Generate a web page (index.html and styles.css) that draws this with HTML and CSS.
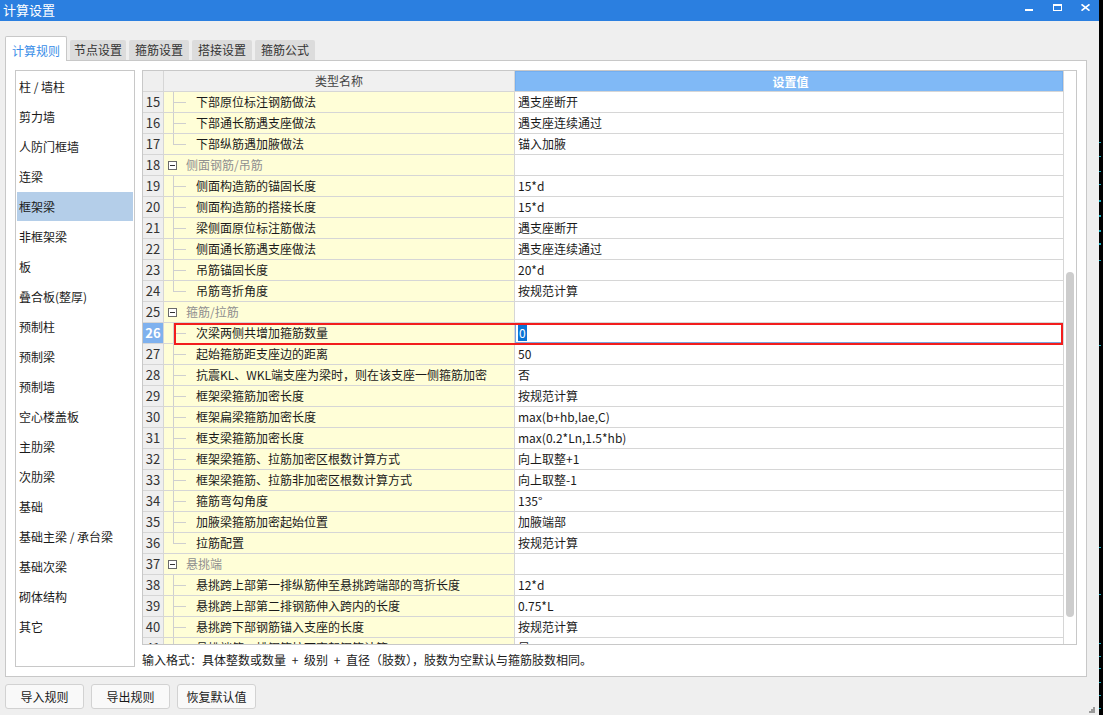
FILE: index.html
```html
<!DOCTYPE html>
<html lang="zh-CN">
<head>
<meta charset="utf-8">
<title>计算设置</title>
<link rel="stylesheet" href="styles.css">
</head>
<body>
<div class="app">
  <div class="window">
    <div class="titlebar">
      <span class="title">计算设置</span>
      <div class="controls">
        <span class="ctl"><svg class="ic-min" width="8" height="2" viewBox="0 0 8 2"><rect x="0" y="0" width="8" height="2" fill="#fff"/></svg></span>
        <span class="ctl"><svg class="ic-max" width="9" height="7" viewBox="0 0 9 7"><rect x="0.5" y="0.5" width="8" height="6" fill="none" stroke="#fff" stroke-width="1"/><rect x="0" y="0" width="9" height="2" fill="#fff"/></svg></span>
        <span class="ctl"><svg class="ic-close" width="9" height="7" viewBox="0 0 9 7"><path d="M0.5 0.3 L8.5 6.7 M8.5 0.3 L0.5 6.7" stroke="#fff" stroke-width="1.6" fill="none"/></svg></span>
      </div>
    </div>

    <div class="tabs">
      <div class="tab active">计算规则</div>
      <div class="tab w56">节点设置</div>
      <div class="tab">箍筋设置</div>
      <div class="tab">搭接设置</div>
      <div class="tab">箍筋公式</div>
    </div>

    <div class="panel">
      <ul class="cats">
        <li>柱 / 墙柱</li>
        <li>剪力墙</li>
        <li>人防门框墙</li>
        <li>连梁</li>
        <li class="sel">框架梁</li>
        <li>非框架梁</li>
        <li>板</li>
        <li>叠合板(整厚)</li>
        <li>预制柱</li>
        <li>预制梁</li>
        <li>预制墙</li>
        <li>空心楼盖板</li>
        <li>主肋梁</li>
        <li>次肋梁</li>
        <li>基础</li>
        <li>基础主梁 / 承台梁</li>
        <li>基础次梁</li>
        <li>砌体结构</li>
        <li>其它</li>
      </ul>

      <div class="right">
        <div class="grid">
          <div class="table">
            <div class="row head">
              <div class="num"></div>
              <div class="name">类型名称</div>
              <div class="val">设置值</div>
            </div>
            <div class="row"><div class="num">15</div><div class="name"><span class="indent"></span>下部原位标注钢筋做法</div><div class="val">遇支座断开</div></div>
            <div class="row"><div class="num">16</div><div class="name"><span class="indent"></span>下部通长筋遇支座做法</div><div class="val">遇支座连续通过</div></div>
            <div class="row"><div class="num">17</div><div class="name"><span class="indent last"></span>下部纵筋遇加腋做法</div><div class="val">锚入加腋</div></div>
            <div class="row"><div class="num">18</div><div class="name group"><span class="gbox"></span>侧面钢筋/吊筋</div><div class="val"></div></div>
            <div class="row"><div class="num">19</div><div class="name"><span class="indent"></span>侧面构造筋的锚固长度</div><div class="val">15*d</div></div>
            <div class="row"><div class="num">20</div><div class="name"><span class="indent"></span>侧面构造筋的搭接长度</div><div class="val">15*d</div></div>
            <div class="row"><div class="num">21</div><div class="name"><span class="indent"></span>梁侧面原位标注筋做法</div><div class="val">遇支座断开</div></div>
            <div class="row"><div class="num">22</div><div class="name"><span class="indent"></span>侧面通长筋遇支座做法</div><div class="val">遇支座连续通过</div></div>
            <div class="row"><div class="num">23</div><div class="name"><span class="indent"></span>吊筋锚固长度</div><div class="val">20*d</div></div>
            <div class="row"><div class="num">24</div><div class="name"><span class="indent last"></span>吊筋弯折角度</div><div class="val">按规范计算</div></div>
            <div class="row"><div class="num">25</div><div class="name group"><span class="gbox"></span>箍筋/拉筋</div><div class="val"></div></div>
            <div class="row cur"><div class="num">26</div><div class="name"><span class="indent"></span>次梁两侧共增加箍筋数量</div><div class="val edit"><span class="seltext">0</span></div><div class="mark"></div></div>
            <div class="row"><div class="num">27</div><div class="name"><span class="indent"></span>起始箍筋距支座边的距离</div><div class="val">50</div></div>
            <div class="row"><div class="num">28</div><div class="name"><span class="indent"></span>抗震KL、WKL端支座为梁时，则在该支座一侧箍筋加密</div><div class="val">否</div></div>
            <div class="row"><div class="num">29</div><div class="name"><span class="indent"></span>框架梁箍筋加密长度</div><div class="val">按规范计算</div></div>
            <div class="row"><div class="num">30</div><div class="name"><span class="indent"></span>框架扁梁箍筋加密长度</div><div class="val">max(b+hb,lae,C)</div></div>
            <div class="row"><div class="num">31</div><div class="name"><span class="indent"></span>框支梁箍筋加密长度</div><div class="val">max(0.2*Ln,1.5*hb)</div></div>
            <div class="row"><div class="num">32</div><div class="name"><span class="indent"></span>框架梁箍筋、拉筋加密区根数计算方式</div><div class="val">向上取整+1</div></div>
            <div class="row"><div class="num">33</div><div class="name"><span class="indent"></span>框架梁箍筋、拉筋非加密区根数计算方式</div><div class="val">向上取整-1</div></div>
            <div class="row"><div class="num">34</div><div class="name"><span class="indent"></span>箍筋弯勾角度</div><div class="val">135°</div></div>
            <div class="row"><div class="num">35</div><div class="name"><span class="indent"></span>加腋梁箍筋加密起始位置</div><div class="val">加腋端部</div></div>
            <div class="row"><div class="num">36</div><div class="name"><span class="indent last"></span>拉筋配置</div><div class="val">按规范计算</div></div>
            <div class="row"><div class="num">37</div><div class="name group"><span class="gbox"></span>悬挑端</div><div class="val"></div></div>
            <div class="row"><div class="num">38</div><div class="name"><span class="indent"></span>悬挑跨上部第一排纵筋伸至悬挑跨端部的弯折长度</div><div class="val">12*d</div></div>
            <div class="row"><div class="num">39</div><div class="name"><span class="indent"></span>悬挑跨上部第二排钢筋伸入跨内的长度</div><div class="val">0.75*L</div></div>
            <div class="row"><div class="num">40</div><div class="name"><span class="indent"></span>悬挑跨下部钢筋锚入支座的长度</div><div class="val">按规范计算</div></div>
            <div class="row"><div class="num">41</div><div class="name"><span class="indent"></span>悬挑端第二排钢筋按可弯起钢筋计算</div><div class="val">是</div></div>
          </div>
          <div class="vscroll"><div class="thumb"></div></div>
        </div>
        <div class="hint">输入格式：具体整数或数量 + 级别 + 直径（肢数），肢数为空默认与箍筋肢数相同。</div>
      </div>
    </div>

    <div class="buttons">
      <div class="btn">导入规则</div>
      <div class="btn">导出规则</div>
      <div class="btn">恢复默认值</div>
    </div>

    <svg class="grip" width="6" height="6" viewBox="0 0 6 6"><rect x="4" y="0" width="2" height="2" fill="#9a9a9a"/><rect x="2" y="2" width="2" height="2" fill="#9a9a9a"/><rect x="4" y="2" width="2" height="2" fill="#9a9a9a"/><rect x="0" y="4" width="2" height="2" fill="#9a9a9a"/><rect x="2" y="4" width="2" height="2" fill="#9a9a9a"/><rect x="4" y="4" width="2" height="2" fill="#9a9a9a"/></svg>
  </div>
  <div class="edge">
    <svg width="4" height="715" viewBox="0 0 4 715">
      <g fill="#17a8b8">
        <rect x="0" y="142" width="2" height="1"/>
        <rect x="0" y="156" width="2" height="1"/>
        <rect x="0" y="171" width="2" height="1"/>
        <rect x="0" y="184" width="2" height="1"/>
        <rect x="0" y="200" width="2" height="2"/>
        <rect x="0" y="215" width="2" height="2"/>
        <rect x="0" y="230" width="2" height="2"/>
        <rect x="0" y="243" width="2" height="2"/>
        <rect x="0" y="260" width="2" height="1"/>
        <rect x="0" y="345" width="2" height="1"/>
        <rect x="0" y="547" width="2" height="1"/>
        <rect x="0" y="594" width="2" height="1"/>
        <rect x="0" y="643" width="2" height="1"/>
        <rect x="0" y="656" width="2" height="1"/>
        <rect x="0" y="668" width="2" height="1"/>
        <rect x="0" y="682" width="2" height="1"/>
        <rect x="0" y="695" width="2" height="1"/>
        <rect x="0" y="708" width="2" height="1"/>
      </g>
    </svg>
  </div>
</div>
</body>
</html>
```

FILE: styles.css
```css
* {
  box-sizing: border-box;
  margin: 0;
  padding: 0;
}

html, body {
  width: 1103px;
  height: 715px;
  overflow: hidden;
}

body {
  background: #efefef;
  font-family: "Noto Sans CJK SC", "Noto Sans", sans-serif;
  font-size: 12px;
  color: #1a1a1a;
}

.app {
  display: flex;
  height: 715px;
}

.window {
  width: 1099px;
  display: flex;
  flex-direction: column;
  position: relative;
}

.edge {
  width: 4px;
  background: #000;
}

.edge svg {
  display: block;
}

/* title bar */
.titlebar {
  height: 21px;
  background: #2b7fe0;
  color: #fff;
  display: flex;
  justify-content: space-between;
}

.title {
  padding-left: 3px;
  font-size: 13px;
  line-height: 19px;
}

.controls {
  display: flex;
}

.ctl {
  width: 28px;
  display: flex;
  justify-content: center;
  align-items: flex-start;
}

.ic-min {
  margin-top: 9px;
}

.ic-max,
.ic-close {
  margin-top: 4px;
}

/* tabs */
.tabs {
  height: 39px;
  display: flex;
  align-items: flex-end;
  gap: 3px;
  padding-left: 5px;
}

.tab {
  width: 60px;
  height: 20px;
  line-height: 20px;
  background: #dcdcdc;
  border-radius: 2px 2px 0 0;
  text-align: center;
  color: #333;
}

.tab.w56 {
  width: 56px;
}

.tab.active {
  width: 62px;
  height: 25px;
  margin-bottom: -1px;
  padding-top: 4px;
  background: #fff;
  border: 1px solid #c8c8c8;
  border-bottom: none;
  border-radius: 2px 2px 0 0;
  color: #3a8ee8;
  z-index: 1;
}

/* panel */
.panel {
  margin: 0 12px 0 5px;
  height: 617px;
  background: #fff;
  border: 1px solid #c8c8c8;
  padding: 9px;
  display: flex;
  gap: 7px;
}

.cats {
  width: 120px;
  flex: none;
  border: 1px solid #c8c8c8;
  padding: 1px;
  list-style: none;
}

.cats li {
  height: 29px;
  margin-bottom: 1px;
  line-height: 29px;
  padding-left: 2px;
  white-space: nowrap;
}

.cats li.sel {
  background: #b4cee9;
}

.right {
  flex: 1;
  display: flex;
  flex-direction: column;
}

/* grid */
.grid {
  height: 575px;
  border: 1px solid #c8c8c8;
  display: flex;
  overflow: hidden;
  flex: none;
}

.table {
  width: 920px;
  flex: none;
  overflow: hidden;
}

.row {
  display: flex;
  height: 21px;
  border-bottom: 1px solid #d6d6d6;
}

.num {
  width: 21px;
  flex: none;
  border-right: 1px solid #d6d6d6;
  background: #efefef;
  text-align: center;
  font-size: 13px;
  line-height: 20px;
  color: #333;
}

.name {
  width: 351px;
  flex: none;
  border-right: 1px solid #d6d6d6;
  background: #fffed7;
  display: flex;
  align-items: center;
  line-height: 20px;
  white-space: nowrap;
  overflow: hidden;
}

.val {
  flex: 1;
  padding-left: 3px;
  line-height: 20px;
  white-space: nowrap;
}

.row.head .num {
  background: #efefef;
}

.row.head .name {
  background: #f0f0f0;
  justify-content: center;
  color: #444;
}

.row.head .val {
  background: #80b9f6;
  color: #fff;
  font-weight: bold;
  text-align: center;
  border: 1px solid #73aef0;
  border-bottom: none;
}

.indent {
  width: 32px;
  height: 20px;
  flex: none;
  background:
    linear-gradient(#cfcfcf, #cfcfcf) 9px 0 / 1px 100% no-repeat,
    linear-gradient(#cfcfcf, #cfcfcf) 9px 10px / 13px 1px no-repeat;
}

.indent.last {
  background:
    linear-gradient(#cfcfcf, #cfcfcf) 9px 0 / 1px 11px no-repeat,
    linear-gradient(#cfcfcf, #cfcfcf) 9px 10px / 13px 1px no-repeat;
}

.name.group {
  color: #8f8f8f;
}

.gbox {
  width: 9px;
  height: 9px;
  flex: none;
  margin: 0 9px 0 4px;
  border: 1px solid #6a6a6a;
  background: linear-gradient(#333, #333) center / 5px 1px no-repeat #fff;
}

/* current row */
.row.cur {
  position: relative;
}

.row.cur .num {
  background: #7fb1ee;
  color: #fff;
  font-weight: bold;
}

.val.edit {
  box-shadow: inset 0 0 0 1px #7aa6de;
}

.seltext {
  background: #0a74d6;
  color: #fff;
  padding: 0 1px;
}

.mark {
  position: absolute;
  left: 31px;
  right: 0;
  top: 0;
  height: 22px;
  border: 2px solid #f21d1d;
}

/* scrollbar */
.vscroll {
  flex: 1;
  border-left: 1px solid #d6d6d6;
  padding-top: 201px;
}

.thumb {
  width: 8px;
  height: 345px;
  margin-left: 2px;
  background: #cdcdcd;
  border-radius: 4px;
}

.hint {
  padding-top: 7px;
  line-height: 16px;
  white-space: nowrap;
  word-spacing: 3px;
}

/* buttons */
.buttons {
  display: flex;
  gap: 7px;
  padding: 7px 0 0 5px;
}

.btn {
  width: 79px;
  height: 25px;
  border: 1px solid #d2d2d2;
  border-radius: 3px;
  background: #f9f9f9;
  line-height: 23px;
  text-align: center;
}

.grip {
  position: absolute;
  right: 4px;
  bottom: 2px;
}
```
